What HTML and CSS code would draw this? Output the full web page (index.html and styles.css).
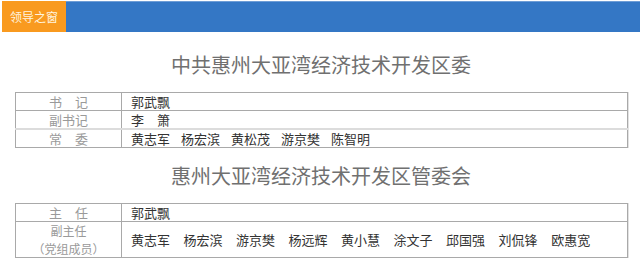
FILE: index.html
```html
<!DOCTYPE html>
<html lang="zh-CN">
<head>
<meta charset="utf-8">
<link rel="stylesheet" href="styles.css">
</head>
<body>
<div class="header">
  <div class="header-tab">领导之窗</div>
  <div class="header-fill"></div>
</div>

<h2 class="title title-first">中共惠州大亚湾经济技术开发区委</h2>
<table class="board">
  <tr>
    <td class="label">书　记</td>
    <td class="names"><span class="nm">郭武飘</span></td>
  </tr>
  <tr>
    <td class="label">副书记</td>
    <td class="names"><span class="nm">李　箫</span></td>
  </tr>
  <tr class="row-soft">
    <td class="label">常　委</td>
    <td class="names names-a"><span class="nm">黄志军</span><span class="nm">杨宏滨</span><span class="nm">黄松茂</span><span class="nm">游京樊</span><span class="nm">陈智明</span></td>
  </tr>
</table>

<h2 class="title title-second">惠州大亚湾经济技术开发区管委会</h2>
<table class="board">
  <tr>
    <td class="label">主　任</td>
    <td class="names"><span class="nm">郭武飘</span></td>
  </tr>
  <tr>
    <td class="label label-tall"><div class="lbl-line">副主任</div><div class="lbl-line">（党组成员）</div></td>
    <td class="names names-b"><span class="nm">黄志军</span><span class="nm">杨宏滨</span><span class="nm">游京樊</span><span class="nm">杨远辉</span><span class="nm">黄小慧</span><span class="nm">涂文子</span><span class="nm">邱国强</span><span class="nm">刘侃锋</span><span class="nm">欧惠宽</span></td>
  </tr>
</table>
</body>
</html>
```

FILE: styles.css
```css
html, body {
  margin: 0;
  padding: 0;
  background: #ffffff;
}

body {
  font-family: "Noto Sans CJK SC", "Noto Sans", sans-serif;
  color: #333;
}

.header {
  display: flex;
  height: 31px;
  margin: 1px 0 0 2px;
}

.header-tab {
  width: 64px;
  background: #f99a1f;
  color: #fff4df;
  font-size: 12px;
  line-height: 31px;
  text-align: center;
}

.header-fill {
  flex: 1;
  background: #3477c5;
  border-top: 1px solid #6e9dd6;
}

.title {
  margin: 0;
  font-size: 20px;
  font-weight: 400;
  line-height: 30px;
  color: #707070;
  text-align: center;
  padding-left: 2px;
}

.title-first {
  margin-top: 18px;
  margin-bottom: 12px;
}

.title-second {
  margin-top: 13px;
  margin-bottom: 12px;
}

.board {
  margin-left: 15px;
  width: 613px;
  border-collapse: collapse;
  border: 1px solid #a9a9a9;
  box-shadow: 1px 0 0 #e2e2e2;
}

.board td {
  border: 1px solid #a9a9a9;
  padding: 0;
  height: 17px;
  font-size: 13px;
  line-height: 17px;
}

.row-soft td {
  border-top: 2px solid #dcdcdc;
}

.label {
  width: 105px;
  text-align: center;
  color: #9a9a9a;
  font-weight: 400;
}

.board td.label-tall {
  height: 35px;
  line-height: 17.5px;
}

.lbl-line {
  height: 17.5px;
  line-height: 17.5px;
  font-size: 12px;
}

.names {
  padding-left: 9px !important;
  color: #333;
  white-space: nowrap;
}

.nm {
  display: inline-block;
}

.names-a .nm {
  margin-right: 11px;
}

.names-b .nm {
  margin-right: 13.5px;
}
```
